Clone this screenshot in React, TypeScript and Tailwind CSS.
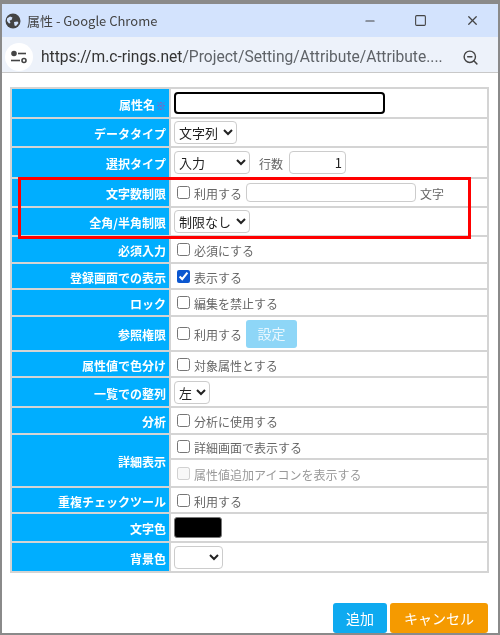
import { ReactNode } from 'react';
import { Minus, Square, X, ZoomOut } from 'lucide-react';

const labelCls =
  'w-[159px] bg-[#00aeff] border-2 border-[#d4d4d4] pr-[3px] pt-[3px] text-right align-middle text-[12px] font-bold text-white whitespace-nowrap';
const valueCls = 'border-2 border-[#d4d4d4] pl-[3px] align-middle text-[12px] text-[#666] whitespace-nowrap';

function Check({ label, checked, disabled }: { label: string; checked?: boolean; disabled?: boolean }) {
  return (
    <label className={`inline-flex items-center gap-[4px] ${disabled ? 'text-[#999]' : ''}`}>
      <input
        type="checkbox"
        defaultChecked={checked}
        disabled={disabled}
        className="m-0 ml-[3px] h-[13px] w-[13px] accent-[#0b57d0]"
      />
      <span className="pt-[3px]">{label}</span>
    </label>
  );
}

function Sel({ width, options }: { width: string; options: string[] }) {
  return (
    <select className={`${width} h-[23px] rounded-[4px] border border-[#ccc] bg-white pl-0 text-[13px] text-[#222]`}>
      {options.map((o) => (
        <option key={o}>{o}</option>
      ))}
    </select>
  );
}

function Row({ label, h, children }: { label: ReactNode; h: string; children: ReactNode }) {
  return (
    <tr className={h}>
      <th className={labelCls}>{label}</th>
      <td className={valueCls}>{children}</td>
    </tr>
  );
}

function GlobeIcon() {
  return (
    <svg width="16" height="16" viewBox="0 0 16 16">
      <circle cx="8" cy="8" r="7.5" fill="#444" />
      <path d="M2 5.5 5 3.5 7.5 4.5 6.5 7 4.5 7.5 5.5 10 4 10.5 2 8Z" fill="#d3e3fd" />
      <path d="M9 9 12.5 8.5 13.5 10 11 13 9.5 12.5Z" fill="#d3e3fd" />
    </svg>
  );
}

function TuneIcon() {
  return (
    <svg width="18" height="14" viewBox="0 0 18 14" fill="none" stroke="#444" strokeWidth="1.6">
      <circle cx="4" cy="3.5" r="2" fill="#444" />
      <path d="M8 3.5H16" />
      <path d="M1 10.5H10" />
      <circle cx="14" cy="10.5" r="2" />
    </svg>
  );
}

export default function App() {
  return (
    <div
      className="relative flex h-[635px] w-[500px] flex-col overflow-hidden border-x-2 border-t-4 border-b-2 border-[#8a8a8a] bg-white blur-[0.6px]"
      style={{ fontFamily: '"Noto Sans CJK JP", "Noto Sans", sans-serif' }}
    >
      {/* title bar */}
      <div className="flex h-[34px] items-center bg-[#d3e3fd] pl-[3px] text-[#444]">
        <GlobeIcon />
        <span className="ml-[6px] text-[13px]">属性 - Google Chrome</span>
        <div className="ml-auto flex items-center">
          <Minus size={14} className="mr-[37px]" />
          <Square size={13} strokeWidth={2} className="mr-[38px]" />
          <X size={15} className="mr-[18px]" />
        </div>
      </div>

      {/* address bar */}
      <div className="flex h-[36px] items-center border-b border-[#c8c8c8] bg-[#edf2fa] pl-[3px] pt-[5px]">
        <div className="flex h-[28px] w-[28px] items-center justify-center rounded-full bg-white">
          <TuneIcon />
        </div>
        <span className="ml-[8px] text-[15.6px] text-[#5f6368]" style={{ fontFamily: '"Roboto", sans-serif' }}>
          <span className="text-[#333]">https://m.c-rings.net</span>/Project/Setting/Attribute/Attribute....
        </span>
        <ZoomOut size={17} className="ml-auto mr-[19px] text-[#444]" />
      </div>

      {/* form */}
      <div className="pl-[8px] pr-[9px] pt-[14px]">
        <table className="w-full table-fixed border-collapse">
          <tbody>
            <Row
              h="h-[30px]"
              label={
                <>
                  属性名<span className="ml-[1px] text-[10px] font-normal text-[#c040a0]">※</span>
                </>
              }
            >
              <input className="block h-[22px] w-[211px] rounded-[4px] border-2 border-black" />
            </Row>
            <Row h="h-[29px]" label="データタイプ">
              <Sel width="w-[63px]" options={['文字列']} />
            </Row>
            <Row h="h-[31px]" label="選択タイプ">
              <div className="flex items-center">
                <Sel width="w-[76px]" options={['入力']} />
                <span className="ml-[9px] pt-[3px]">行数</span>
                <input
                  defaultValue="1"
                  className="ml-[6px] h-[23px] w-[57px] rounded-[4px] border border-[#ccc] pr-[3px] text-right text-[13px] text-[#222]"
                />
              </div>
            </Row>
            <Row h="h-[29px]" label="文字数制限">
              <div className="flex items-center">
                <Check label="利用する" />
                <input className="ml-[4px] h-[19px] w-[170px] rounded-[4px] border border-[#ccc]" />
                <span className="ml-[4px] pt-[3px]">文字</span>
              </div>
            </Row>
            <Row h="h-[29px]" label="全角/半角制限">
              <Sel width="w-[76px]" options={['制限なし']} />
            </Row>
            <Row h="h-[27px]" label="必須入力">
              <Check label="必須にする" />
            </Row>
            <Row h="h-[26px]" label="登録画面での表示">
              <Check label="表示する" checked />
            </Row>
            <Row h="h-[27px]" label="ロック">
              <Check label="編集を禁止する" />
            </Row>
            <Row h="h-[35px]" label="参照権限">
              <div className="flex items-center">
                <Check label="利用する" />
                <button className="ml-[4px] h-[28px] w-[51px] rounded-[3px] bg-[#8ed6f7] text-[14px] text-[#e8f7fe]">
                  設定
                </button>
              </div>
            </Row>
            <Row h="h-[26px]" label="属性値で色分け">
              <Check label="対象属性とする" />
            </Row>
            <Row h="h-[30px]" label="一覧での整列">
              <Sel width="w-[36px]" options={['左']} />
            </Row>
            <Row h="h-[27px]" label="分析">
              <Check label="分析に使用する" />
            </Row>
            <tr className="h-[25px]">
              <th rowSpan={2} className={labelCls}>
                詳細表示
              </th>
              <td className={valueCls}>
                <Check label="詳細画面で表示する" />
              </td>
            </tr>
            <tr className="h-[28px]">
              <td className={valueCls}>
                <Check label="属性値追加アイコンを表示する" disabled />
              </td>
            </tr>
            <Row h="h-[26px]" label="重複チェックツール">
              <Check label="利用する" />
            </Row>
            <Row h="h-[29px]" label="文字色">
              <div className="h-[21px] w-[48px] rounded-[3px] border border-[#777] bg-black" />
            </Row>
            <Row h="h-[30px]" label="背景色">
              <Sel width="w-[49px]" options={['']} />
            </Row>
          </tbody>
        </table>

        <div className="mt-[30px] flex justify-end gap-[3px] pr-[1px]">
          <button className="h-[30px] w-[54px] rounded-[3px] bg-[#0eaaf0] text-[14px] text-white">追加</button>
          <button className="h-[30px] w-[98px] rounded-[3px] bg-[#f59a00] text-[14px] text-white">キャンセル</button>
        </div>
      </div>

      {/* red highlight drawn over the two rows */}
      <div className="absolute left-[16px] top-[173px] h-[62px] w-[453px] border-[3px] border-[#f00]" />
    </div>
  );
}
